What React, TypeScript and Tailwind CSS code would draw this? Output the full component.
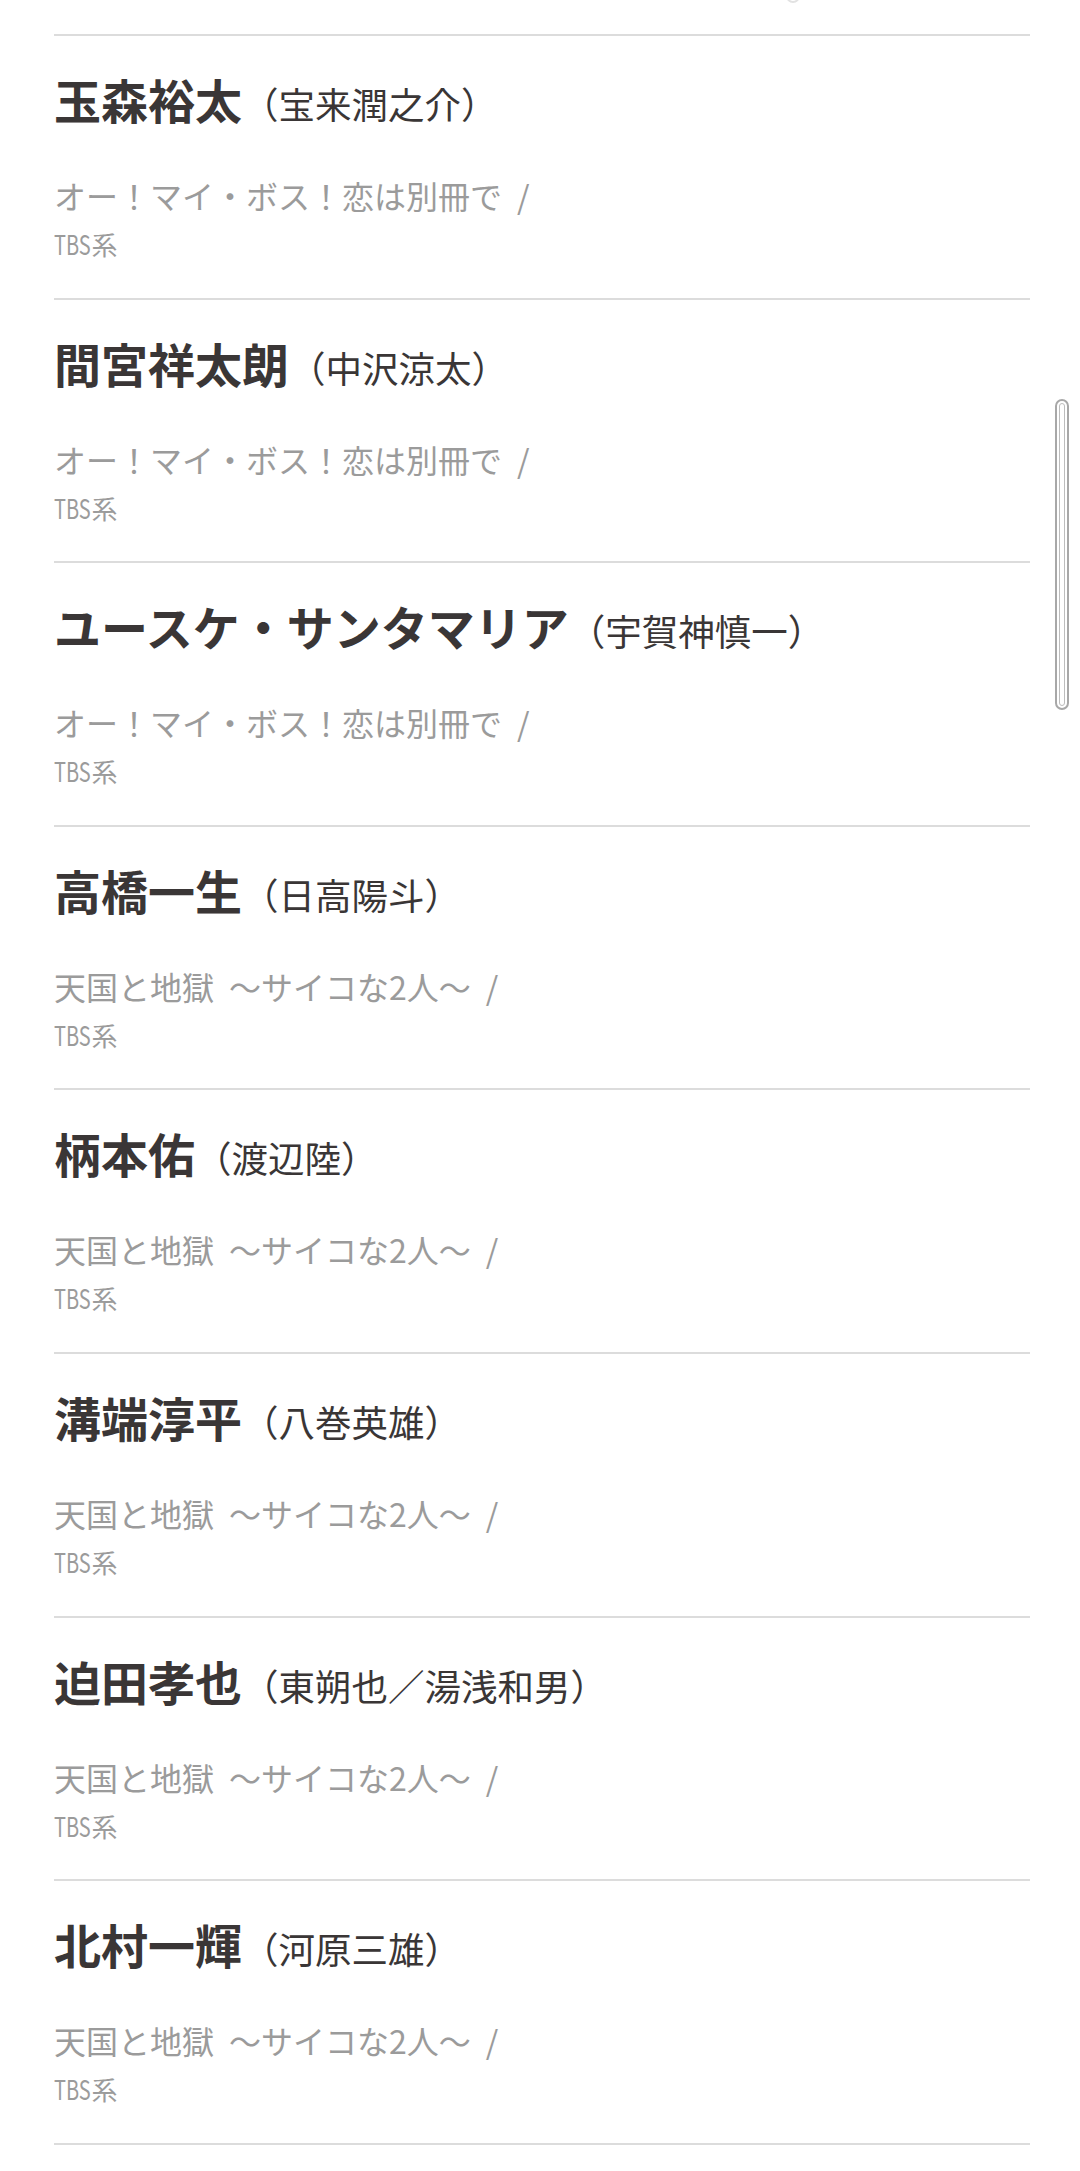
import React from "react";

type Cast = {
  name: string;
  role: string;
  station: string;
  parts: string[];
};

const OH_MY_BOSS = ["オー！マイ・ボス！恋は別冊で"];
const TENGOKU = ["天国と地獄", "～サイコな2人～"];

const castList: Cast[] = [
  { name: "玉森裕太", role: "（宝来潤之介）", station: "TBS", parts: OH_MY_BOSS },
  { name: "間宮祥太朗", role: "（中沢涼太）", station: "TBS", parts: OH_MY_BOSS },
  { name: "ユースケ・サンタマリア", role: "（宇賀神慎一）", station: "TBS", parts: OH_MY_BOSS },
  { name: "高橋一生", role: "（日高陽斗）", station: "TBS", parts: TENGOKU },
  { name: "柄本佑", role: "（渡辺陸）", station: "TBS", parts: TENGOKU },
  { name: "溝端淳平", role: "（八巻英雄）", station: "TBS", parts: TENGOKU },
  { name: "迫田孝也", role: "（東朔也／湯浅和男）", station: "TBS", parts: TENGOKU },
  { name: "北村一輝", role: "（河原三雄）", station: "TBS", parts: TENGOKU },
];

const font = { fontFamily: '"Noto Sans CJK JP", "Noto Sans", sans-serif' };

const CastRow = ({ item }: { item: Cast }) => {
  return (
    <li className="h-[263.6px] border-t-2 border-[#dcdcdc] flex flex-col">
      <div className="pt-[31px] leading-[64px] text-[#3a3636]">
        <span className="text-[47px] font-bold">{item.name}</span>
        <span className="text-[36.5px]">{item.role}</span>
      </div>
      <p className="mt-[29px] text-[32px] leading-[44px] text-[#9b9b9b]">
        {item.parts.map((p, i) => (
          <React.Fragment key={i}>
            {p}
            <span className="inline-block w-[15px]" />
          </React.Fragment>
        ))}
        /
      </p>
      <p className="mt-[7px] text-[26px] leading-[40px] text-[#9b9b9b]">
        {/* the station letters are set condensed */}
        <span className="inline-block origin-left scale-x-[0.74] -mr-[12px] text-[27px]">
          {item.station}
        </span>
        系
      </p>
    </li>
  );
};

export default function App() {
  return (
    <div className="relative min-h-[2171px] w-[1080px] bg-white overflow-hidden" style={font}>
      <div className="ml-[54px] w-[976px]">
        {/* tail of the previous entry */}
        <div className="h-[34px] flex justify-end pr-[230px]">
          <div className="w-[14px] h-[14px] -mt-[11px] rounded-full border-2 border-[#e2e2e2]" />
        </div>
        <ul>
          {castList.map((item, key) => (
            <CastRow key={key} item={item} />
          ))}
        </ul>
        <div className="border-t-2 border-[#dcdcdc]" />
      </div>

      {/* scrollbar thumb */}
      <div className="absolute left-[1055px] top-[399px] w-[14px] h-[311px] rounded-full border-2 border-[#a8a8a8] bg-white p-[2px]">
        <div className="h-full w-full rounded-full border border-[#bdbdbd]" />
      </div>
    </div>
  );
}
